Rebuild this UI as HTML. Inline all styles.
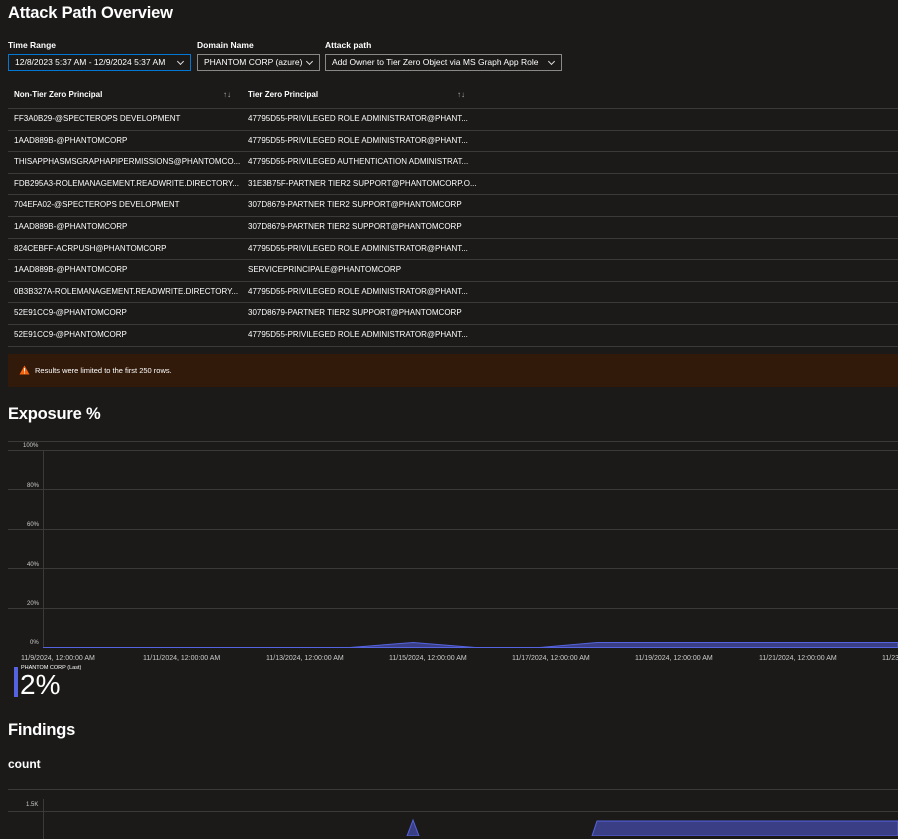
<!DOCTYPE html>
<html><head><style>
body{margin:0;background:#1b1a19;color:#fff;font-family:"Liberation Sans",sans-serif;width:898px;height:836px;overflow:hidden;position:relative}
.a{position:absolute;white-space:nowrap}
h1{position:absolute;margin:0;font-size:16.5px;font-weight:bold;left:8px;letter-spacing:-0.2px}
.lbl{font-size:8.5px;font-weight:bold;top:40px}
.dd{position:absolute;top:54px;height:15px;border:1px solid #8a8886;font-size:8.5px;line-height:15px;padding-left:6px;box-sizing:content-box;overflow:hidden}
.dd:after{content:"";position:absolute;right:7px;top:4px;width:4px;height:4px;border-right:1px solid #ddd;border-bottom:1px solid #ddd;transform:rotate(45deg)}
.row{position:absolute;left:8px;width:890px;height:21.6px;border-bottom:1px solid #3b3a39;font-size:8px;line-height:21px}
.row span{position:absolute}
.c1{left:6px}.c2{left:240px}
.ax{font-size:6px;color:#ccc}
.g{position:absolute;height:1px;background:#3b3a39}
</style></head><body>
<h1 style="top:4px">Attack Path Overview</h1>
<div class="a lbl" style="left:8px">Time Range</div>
<div class="a lbl" style="left:197px">Domain Name</div>
<div class="a lbl" style="left:325px">Attack path</div>
<div class="dd" style="left:8px;width:175px;border:1px solid #0078d4">12/8/2023 5:37 AM - 12/9/2024 5:37 AM</div>
<div class="dd" style="left:197px;width:115px">PHANTOM CORP (azure)</div>
<div class="dd" style="left:325px;width:229px">Add Owner to Tier Zero Object via MS Graph App Role</div>
<div class="row" style="top:84px;height:23.6px;font-weight:bold"><span class="c1">Non-Tier Zero Principal</span><span style="left:215px;color:#aaa">↑↓</span><span class="c2">Tier Zero Principal</span><span style="left:449px;color:#aaa">↑↓</span></div>
<div class="row" style="top:108px"><span class="c1">FF3A0B29-@SPECTEROPS DEVELOPMENT</span><span class="c2">47795D55-PRIVILEGED ROLE ADMINISTRATOR@PHANT...</span></div>
<div class="row" style="top:129.6px"><span class="c1">1AAD889B-@PHANTOMCORP</span><span class="c2">47795D55-PRIVILEGED ROLE ADMINISTRATOR@PHANT...</span></div>
<div class="row" style="top:151.2px"><span class="c1">THISAPPHASMSGRAPHAPIPERMISSIONS@PHANTOMCO...</span><span class="c2">47795D55-PRIVILEGED AUTHENTICATION ADMINISTRAT...</span></div>
<div class="row" style="top:172.8px"><span class="c1">FDB295A3-ROLEMANAGEMENT.READWRITE.DIRECTORY...</span><span class="c2">31E3B75F-PARTNER TIER2 SUPPORT@PHANTOMCORP.O...</span></div>
<div class="row" style="top:194.4px"><span class="c1">704EFA02-@SPECTEROPS DEVELOPMENT</span><span class="c2">307D8679-PARTNER TIER2 SUPPORT@PHANTOMCORP</span></div>
<div class="row" style="top:216px"><span class="c1">1AAD889B-@PHANTOMCORP</span><span class="c2">307D8679-PARTNER TIER2 SUPPORT@PHANTOMCORP</span></div>
<div class="row" style="top:237.6px"><span class="c1">824CEBFF-ACRPUSH@PHANTOMCORP</span><span class="c2">47795D55-PRIVILEGED ROLE ADMINISTRATOR@PHANT...</span></div>
<div class="row" style="top:259.2px"><span class="c1">1AAD889B-@PHANTOMCORP</span><span class="c2">SERVICEPRINCIPALE@PHANTOMCORP</span></div>
<div class="row" style="top:280.8px"><span class="c1">0B3B327A-ROLEMANAGEMENT.READWRITE.DIRECTORY...</span><span class="c2">47795D55-PRIVILEGED ROLE ADMINISTRATOR@PHANT...</span></div>
<div class="row" style="top:302.4px"><span class="c1">52E91CC9-@PHANTOMCORP</span><span class="c2">307D8679-PARTNER TIER2 SUPPORT@PHANTOMCORP</span></div>
<div class="row" style="top:324px"><span class="c1">52E91CC9-@PHANTOMCORP</span><span class="c2">47795D55-PRIVILEGED ROLE ADMINISTRATOR@PHANT...</span></div>
<div class="a" style="left:8px;top:354px;width:890px;height:33px;background:#321a0b"></div>
<svg class="a" style="left:19px;top:365px" width="11" height="10"><path d="M5.5 0.5L10.5 9.5H0.5Z" fill="#f7630c"/><rect x="5" y="3" width="1" height="3.5" fill="#fff"/><rect x="5" y="7.5" width="1" height="1" fill="#fff"/></svg>
<div class="a" style="left:35px;top:366px;font-size:7.5px">Results were limited to the first 250 rows.</div>
<h1 style="top:405px">Exposure %</h1>
<div class="g" style="left:8px;top:441px;width:890px"></div>
<div class="g" style="left:8px;top:450px;width:890px"></div>
<div class="g" style="left:8px;top:489px;width:890px"></div>
<div class="g" style="left:8px;top:529px;width:890px"></div>
<div class="g" style="left:8px;top:568px;width:890px"></div>
<div class="g" style="left:8px;top:608px;width:890px"></div>
<div class="a" style="left:43px;top:450px;width:1px;height:197px;background:#3b3a39"></div>
<div class="a ax" style="left:23px;top:443px">100%</div>
<div class="a ax" style="left:27px;top:483px">80%</div>
<div class="a ax" style="left:27px;top:522px">60%</div>
<div class="a ax" style="left:27px;top:562px">40%</div>
<div class="a ax" style="left:27px;top:601px">20%</div>
<div class="a ax" style="left:30px;top:640px">0%</div>
<svg class="a" style="left:0;top:630px" width="898" height="20"><path d="M43 17.5H350L413 12.5L475 17.5H540L597 12.5H898V17.5H43Z" fill="#3a3f85" stroke="#5563e0" stroke-width="1"/></svg>
<div class="a ax" style="left:21px;top:655px;font-size:7px">11/9/2024, 12:00:00 AM</div>
<div class="a ax" style="left:143px;top:655px;font-size:7px">11/11/2024, 12:00:00 AM</div>
<div class="a ax" style="left:266px;top:655px;font-size:7px">11/13/2024, 12:00:00 AM</div>
<div class="a ax" style="left:389px;top:655px;font-size:7px">11/15/2024, 12:00:00 AM</div>
<div class="a ax" style="left:512px;top:655px;font-size:7px">11/17/2024, 12:00:00 AM</div>
<div class="a ax" style="left:635px;top:655px;font-size:7px">11/19/2024, 12:00:00 AM</div>
<div class="a ax" style="left:759px;top:655px;font-size:7px">11/21/2024, 12:00:00 AM</div>
<div class="a ax" style="left:882px;top:655px;font-size:7px">11/23</div>
<div class="a" style="left:14px;top:667px;width:4px;height:30px;background:#5563e0"></div>
<div class="a" style="left:21px;top:665px;font-size:5.5px">PHANTOM CORP (Last)</div>
<div class="a" style="left:20px;top:670px;font-size:28px;line-height:30px">2%</div>
<h1 style="top:721px">Findings</h1>
<div class="a" style="left:8px;top:757px;font-size:12px;font-weight:bold">count</div>
<div class="g" style="left:8px;top:789px;width:890px"></div>
<div class="g" style="left:8px;top:811px;width:890px"></div>
<div class="a" style="left:43px;top:799px;width:1px;height:40px;background:#3b3a39"></div>
<div class="a ax" style="left:26px;top:802px">1.5K</div>
<svg class="a" style="left:0;top:815px" width="898" height="21"><path d="M407 21L413 5L419 21Z" fill="#3a3f85" stroke="#5563e0"/><path d="M592 21L597 6H898V21Z" fill="#3a3f85" stroke="#5563e0"/></svg>
</body></html>
